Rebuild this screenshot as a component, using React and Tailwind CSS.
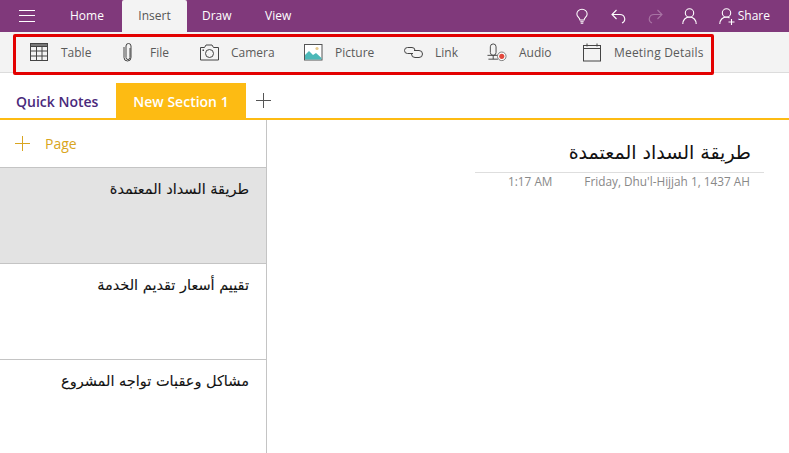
const sans = 'font-["Open_Sans","Noto_Sans",sans-serif]'

function TableIcon() {
  return (
    <svg width="19" height="19" viewBox="0 0 19 19" fill="none" stroke="#444" strokeWidth="1">
      <rect x="0.5" y="0.5" width="17" height="17" />
      <rect x="0.5" y="0.5" width="17" height="3" fill="#777" />
      <path d="M6.5 3.5v14M12 3.5v14M0.5 8h17M0.5 13h17" />
    </svg>
  )
}

function ClipIcon() {
  return (
    <svg width="10" height="19" viewBox="0 0 10 19" fill="none" stroke="#444" strokeWidth="1">
      <path d="M7 5v9.500a2 2 0 0 1-4 0V3a2.500 2.500 0 0 1 5 0 M8 3v11.500a3.500 3.500 0 0 1-7 0V4" />
    </svg>
  )
}

function CameraIcon() {
  return (
    <svg width="19" height="17" viewBox="0 0 19 17" fill="none" stroke="#444" strokeWidth="1">
      <path d="M0.5 3.5h4l1.500-2.500h6l1.500 2.500h5v12.500h-18z" />
      <circle cx="9.500" cy="9.500" r="4" />
      <rect x="2.500" y="5.500" width="1.500" height="1.500" fill="#444" stroke="none" />
    </svg>
  )
}

function PictureIcon() {
  return (
    <svg width="19" height="17" viewBox="0 0 19 17">
      <rect x="0.500" y="0.500" width="17.500" height="15.500" fill="#fff" stroke="#555" />
      <circle cx="13" cy="4.500" r="1.600" fill="#e8c98a" />
      <path d="M1 15.500V11l4-4 4 4 3-2 5.500 5v1.500z" fill="#4bb8b8" />
    </svg>
  )
}

function LinkIcon() {
  return (
    <svg width="19" height="11" viewBox="0 0 19 11" fill="none" stroke="#444" strokeWidth="1">
      <path d="M9 6.500H3.500a3 3 0 0 1 0-6h4.500a3 3 0 0 1 3 3" />
      <path d="M10 3.500h5a3.500 3.500 0 0 1 0 7h-4a3.500 3.500 0 0 1-3.500-3.500" />
    </svg>
  )
}

function AudioIcon() {
  return (
    <svg width="21" height="19" viewBox="0 0 21 19" fill="none" stroke="#444" strokeWidth="1">
      <rect x="3.500" y="0.500" width="6" height="12" rx="3" />
      <path d="M0.500 12.500h12M6.500 12.500v4M1.500 16.500h10" />
      <circle cx="15.500" cy="13.500" r="4.500" fill="#fff" stroke="#777" />
      <circle cx="15.500" cy="13.500" r="2.700" fill="#e2483d" stroke="none" />
    </svg>
  )
}

function CalendarIcon() {
  return (
    <svg width="19" height="19" viewBox="0 0 19 19" fill="none" stroke="#444" strokeWidth="1">
      <rect x="0.500" y="2.500" width="17" height="15.500" />
      <path d="M0.500 5.500h17M4 0.500v3M14 0.500v3" />
    </svg>
  )
}

function Cross({ color }) {
  return (
    <svg width="15" height="15" viewBox="0 0 15 15" fill="none" stroke={color} strokeWidth="1">
      <path d="M7.500 0v15M0 7.500h15" />
    </svg>
  )
}

function Burger() {
  return (
    <svg width="16" height="12" viewBox="0 0 16 12" fill="none" stroke="#fff" strokeWidth="1">
      <path d="M0 0.500h16M0 5.500h16M0 11.500h16" />
    </svg>
  )
}

function Bulb() {
  return (
    <svg width="12" height="17" viewBox="0 0 14 18" fill="none" stroke="#fff" strokeWidth="1.200">
      <path d="M4.500 13c0-2.500-3.500-3.500-3.500-7a6 5.500 0 0 1 12 0c0 3.500-3.500 4.500-3.500 7z" />
      <path d="M5 15h4M5.500 17h3" />
    </svg>
  )
}

function UndoArrow({ color, flip }) {
  return (
    <svg width="15" height="15" viewBox="0 0 15 15" fill="none" stroke={color} strokeWidth="1.100" className={flip ? '-scale-x-100' : ''}>
      <path d="M5.500 1L1 5.500 5.500 10M1 5.500h8a5 4.500 0 0 1 2 8.500" />
    </svg>
  )
}

function Person({ plus }) {
  return (
    <svg width="17" height="17" viewBox="0 0 17 17" fill="none" stroke="#fff" strokeWidth="1.100">
      <circle cx="7.500" cy="5" r="4.200" />
      <path d="M0.800 16c0-4 2.700-7 6.700-7" />
      {plus ? <path d="M7.500 9c1.500 0 2.500 0.500 3 1M12.500 11v6M9.500 14h6" /> : <path d="M7.500 9c4 0 6.700 3 6.700 7" />}
    </svg>
  )
}

const tools = [
  { label: 'Table', icon: <TableIcon />, width: 'w-[89px]', text: '' },
  { label: 'File', icon: <ClipIcon />, width: 'w-[81px]', text: '' },
  { label: 'Camera', icon: <CameraIcon />, width: 'w-[104px]', text: '' },
  { label: 'Picture', icon: <PictureIcon />, width: 'w-[100px]', text: '' },
  { label: 'Link', icon: <LinkIcon />, width: 'w-[84px]', text: '' },
  { label: 'Audio', icon: <AudioIcon />, width: 'w-[95px]', text: '' },
  { label: 'Meeting Details', icon: <CalendarIcon />, width: '', text: 'tracking-[0.2px]' },
]

const pages = [
  { title: 'طريقة السداد المعتمدة', active: true },
  { title: 'تقييم أسعار تقديم الخدمة' },
  { title: 'مشاكل وعقبات تواجه المشروع' },
]

export default function App() {
  return (
    <div className={`relative w-[789px] h-[453px] overflow-hidden bg-white ${sans}`}>
      {/* title bar */}
      <div className="flex h-[32px] items-stretch bg-[#80397b] text-[12px] text-white">
        <div className="flex w-[56px] items-center pl-[19px]">
          <Burger />
        </div>
        <div className="flex w-[66px] items-center pl-[14px]">Home</div>
        <div className="flex w-[65px] items-center justify-center rounded-t-[2px] bg-[#f3f3f3] text-[#555]">Insert</div>
        <div className="flex w-[64px] items-center pl-[15px]">Draw</div>
        <div className="flex items-center pl-[14px]">View</div>
        <div className="ml-auto flex items-center pr-[19px]">
          <Bulb />
          <span className="ml-[23px]"><UndoArrow color="#fff" /></span>
          <span className="ml-[22px]"><UndoArrow color="#a874a4" flip /></span>
          <span className="ml-[19px]"><Person /></span>
          <span className="ml-[20px]"><Person plus /></span>
          <span className="ml-[2px]">Share</span>
        </div>
      </div>

      {/* ribbon */}
      <div className="flex h-[41px] items-center border-b border-[#dcdcdc] bg-[#f3f3f3] pl-[29px] text-[12px] text-[#5a5a5a]">
        {tools.map((t) => (
          <div key={t.label} className={`flex items-center ${t.width}`}>
            <span className="flex w-[20px] justify-center">{t.icon}</span>
            <span className={`ml-[12px] mt-[1px] ${t.text}`}>{t.label}</span>
          </div>
        ))}
      </div>

      {/* section tabs */}
      <div className="flex h-[47px] items-end border-b-2 border-[#fdbb13]">
        <div className="flex h-[35px] w-[116px] items-center pl-[16px] pt-[1px] text-[14px] font-semibold text-[#4a2a7b]">Quick Notes</div>
        <div className="flex h-[35px] w-[130px] items-center justify-center bg-[#fdbb13] pt-[1px] text-[14px] font-semibold text-white">New Section 1</div>
        <div className="flex h-[35px] w-[34px] items-center justify-center">
          <Cross color="#555" />
        </div>
      </div>

      <div className="flex h-[333px]">
        {/* page list */}
        <div className="w-[267px] border-r border-[#c4c4c4]">
          <div className="flex h-[48px] items-center border-b border-[#c4c4c4] pl-[15px] text-[14px] text-[#d9a520]">
            <Cross color="#d9a520" />
            <span className="ml-[15px]">Page</span>
          </div>
          {pages.map((p) => (
            <div
              key={p.title}
              dir="rtl"
              className={`h-[96px] border-b border-[#c4c4c4] pr-[17px] pt-[11px] font-["DejaVu_Sans",sans-serif] text-[14.5px] text-[#111] [-webkit-text-stroke:0.1px_#111] ${p.active ? 'bg-[#e3e3e3]' : ''}`}
            >
              {p.title}
            </div>
          ))}
        </div>

        {/* note */}
        <div className="flex-1">
          <div className="ml-[208px] mr-[25px] mt-[16px]">
            <div dir="rtl" className='border-b border-[#dedede] pb-[4px] pr-[13px] font-["DejaVu_Sans",sans-serif] text-[19px] leading-[32px] text-[#111]'>
              طريقة السداد المعتمدة
            </div>
            <div className="flex justify-between pl-[33px] pr-[14px] text-[11.8px] text-[#888]">
              <span>1:17 AM</span>
              <span>Friday, Dhu'l-Hijjah 1, 1437 AH</span>
            </div>
          </div>
        </div>
      </div>

      {/* red highlight */}
      <div className="absolute left-[13px] top-[34px] h-[41px] w-[701px] rounded-[2px] border-[3px] border-[#e30000]" />
    </div>
  )
}
